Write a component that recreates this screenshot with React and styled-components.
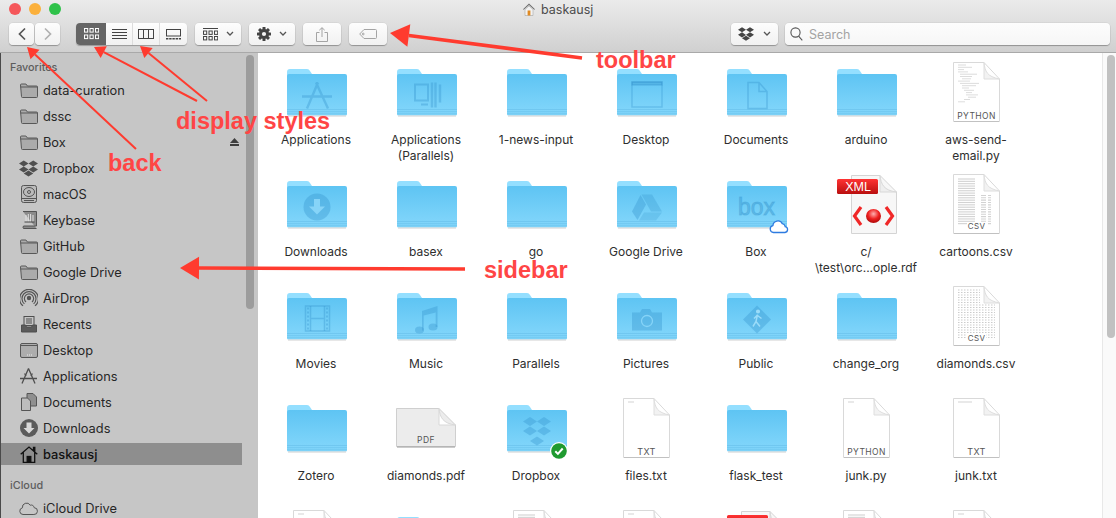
import React from "react";
import styled, { createGlobalStyle } from "styled-components";
import { FaDropbox } from "react-icons/fa";

const Global = createGlobalStyle`
  html, body { margin: 0; padding: 0; width: 1116px; height: 518px; overflow: hidden; background: #fff; }
  * { box-sizing: border-box; }
`;

const Window = styled.div`
  position: relative;
  width: 1116px;
  height: 518px;
  overflow: hidden;
  display: flex;
  flex-direction: column;
  font-family: Inter, "Liberation Sans", sans-serif;
  color: #2c2c2c;
`;

const TitleArea = styled.header`
  height: 53px;
  flex: none;
  padding: 0 6px 0 9px;
  background: linear-gradient(#ebebeb, #d0d0d0);
  border-bottom: 1px solid #a9a9a9;
  display: flex;
  flex-direction: column;
`;
const TitleRow = styled.div`
  height: 23px;
  flex: none;
  display: flex;
  align-items: center;
  padding-bottom: 5px;
`;
const Lights = styled.div`
  display: flex;
  gap: 8px;
  width: 52px;
`;
const Light = styled.span`
  width: 12px;
  height: 12px;
  border-radius: 50%;
  background: ${p => p.$c};
`;
const Title = styled.div`
  display: flex;
  align-items: center;
  gap: 6px;
  font-size: 12.5px;
  color: #4c4c4c;
  margin-left: 462px;
`;
const Toolbar = styled.div`
  display: flex;
  align-items: stretch;
  height: 22px;
`;
const ToolButton = styled.div`
  width: ${p => p.$w}px;
  margin-left: ${p => p.$ml || 0}px;
  display: flex;
  align-items: center;
  justify-content: center;
  gap: ${p => p.$gap || 0}px;
  background: linear-gradient(#fdfdfd, #f1f1f1);
  border-radius: 4px;
  box-shadow: 0 1px 1px rgba(0,0,0,.28), 0 0 0 .5px rgba(0,0,0,.08);
  color: #444;
`;
const ViewGroup = styled.div`
  width: 111px;
  margin-left: 16px;
  display: grid;
  grid-template-columns: 30px 26px 27px 28px;
  border-radius: 4px;
  overflow: hidden;
  box-shadow: 0 1px 1px rgba(0,0,0,.28);
  background: linear-gradient(#fdfdfd, #f1f1f1);
`;
const ViewSeg = styled.div`
  display: flex;
  align-items: center;
  justify-content: center;
  border-left: ${p => (p.$first || p.$active ? "none" : "1px solid #dcdcdc")};
  background: ${p => (p.$active ? "#656565" : "transparent")};
`;
const Search = styled.div`
  width: 325px;
  margin-left: 7px;
  display: flex;
  align-items: center;
  gap: 6px;
  padding-left: 5px;
  background: linear-gradient(#fdfdfd, #f6f6f6);
  border-radius: 4px;
  box-shadow: 0 1px 1px rgba(0,0,0,.28), 0 0 0 .5px rgba(0,0,0,.08);
  font-size: 12.5px;
  color: #a3a3a3;
`;
const Spacer = styled.div`
  flex: 1;
`;

const Body = styled.div`
  flex: 1;
  min-height: 0;
  display: flex;
`;
const Sidebar = styled.aside`
  width: 258px;
  flex: none;
  display: flex;
  background: #c6c6c6;
  border-left: 1px solid #4a4a4a;
`;
const SideList = styled.nav`
  width: 241px;
  flex: none;
  display: flex;
  flex-direction: column;
  padding-top: 7px;
`;
const SideHead = styled.div`
  height: 16px;
  line-height: 16px;
  padding-left: 9px;
  font-size: 10.8px;
  font-weight: 500;
  color: #5d5d5d;
  margin-top: ${p => p.$mt || 0}px;
  margin-bottom: 1px;
`;
const SideItem = styled.div`
  height: 26px;
  flex: none;
  display: flex;
  align-items: center;
  padding-left: 18px;
  position: relative;
  font-size: 12.8px;
  color: #262626;
  &::before {
    content: "";
    display: ${p => (p.$selected ? "block" : "none")};
    position: absolute;
    left: 0;
    right: 0;
    top: 2px;
    bottom: 2px;
    background: #8e8e8e;
  }
`;
const SideIcon = styled.span`
  width: 19px;
  height: 20px;
  margin-right: 5px;
  position: relative;
  display: flex;
  align-items: center;
  justify-content: center;
  color: #4f4f4f;
`;
const SideText = styled.span`
  position: relative;
  flex: 1;
  color: ${p => (p.$selected ? "#111" : "inherit")};
  font-weight: ${p => (p.$selected ? 500 : 400)};
`;
const Eject = styled.span`
  position: relative;
  margin-right: 3px;
  display: flex;
`;
const SideTrack = styled.div`
  flex: 1;
  padding: 2px 4px 0;
`;
const SideThumb = styled.div`
  width: 8px;
  height: 254px;
  border-radius: 4px;
  background: #9c9c9c;
`;

const Main = styled.main`
  flex: 1;
  min-width: 0;
  display: flex;
  background: #fff;
`;
const Grid = styled.section`
  flex: 1;
  padding: 7px 0 0 3px;
  display: grid;
  grid-template-columns: repeat(7, 110px);
  grid-auto-rows: 112px;
  align-content: start;
  overflow: hidden;
`;
const Cell = styled.div`
  display: flex;
  flex-direction: column;
  align-items: center;
`;
const IconBox = styled.div`
  width: 64px;
  height: 64px;
  flex: none;
  margin-bottom: 8px;
  display: flex;
  align-items: center;
  justify-content: center;
`;
const NudgedSvg = styled.svg`
  flex: none;
  margin-left: 2px;
  overflow: visible;
`;
const Label = styled.div`
  width: 106px;
  text-align: center;
  font-size: 12px;
  line-height: 16px;
  color: #2e2e2e;
  white-space: pre-line;
`;
const MainTrack = styled.div`
  width: 14px;
  flex: none;
  padding: 2px 2px 0 4px;
  background: #fafafa;
  border-left: 1px solid #e8e8e8;
`;
const MainThumb = styled.div`
  width: 8px;
  height: 283px;
  border-radius: 4px;
  background: #c1c1c1;
`;

const Overlay = styled.svg`
  position: absolute;
  inset: 0;
  pointer-events: none;
`;
const Note = styled.div`
  position: absolute;
  left: ${p => p.$x}px;
  top: ${p => p.$y}px;
  font-family: "Liberation Sans", Arial, sans-serif;
  font-weight: 700;
  font-size: 23.5px;
  line-height: 28px;
  color: #ff4545;
  white-space: nowrap;
`;

/* ---------- toolbar drawings ---------- */
const Chevron = ({ dir, color }) => (
  <svg width="10" height="14" viewBox="0 0 10 14" fill="none" stroke={color} strokeWidth="1.7">
    <path d={dir === "l" ? "M8 1.5 2.5 7 8 12.5" : "M2 1.5 7.5 7 2 12.5"} />
  </svg>
);
const SmallChevron = () => (
  <svg width="8" height="6" viewBox="0 0 8 6" fill="none" stroke="#555" strokeWidth="1.3"><path d="M1 1l3 3 3-3" /></svg>
);
const GridGlyph = ({ color, w = 15 }) => (
  <svg width={w} height="12" viewBox="0 0 15 12" fill="none" stroke={color} strokeWidth="1">
    {[0, 5.5, 11].map(x => [0.5, 7].map(y => <rect key={x + "-" + y} x={x + 0.5} y={y} width="3.2" height="3.6" />))}
  </svg>
);
const ListGlyph = () => (
  <svg width="15" height="11" viewBox="0 0 15 11" stroke="#444" strokeWidth="1">
    {[0.5, 3.5, 6.5, 9.5].map(y => <path key={y} d={`M0 ${y}h15`} />)}
  </svg>
);
const ColumnsGlyph = () => (
  <svg width="16" height="11" viewBox="0 0 16 11" fill="none" stroke="#444" strokeWidth="1">
    <rect x=".5" y=".5" width="15" height="9" /><path d="M5.5 .5v9M10.5 .5v9" />
  </svg>
);
const CoverGlyph = () => (
  <svg width="15" height="11" viewBox="0 0 15 11" fill="none" stroke="#444" strokeWidth="1">
    <rect x=".5" y=".5" width="14" height="6.5" />
    <path d="M0 9.8h2.4M3.2 9.8h2.4M6.4 9.8h2.4M9.6 9.8h2.4M12.8 9.8h2.2" strokeWidth="1.6" />
  </svg>
);
const ArrangeGlyph = () => (
  <svg width="15" height="13" viewBox="0 0 15 13" fill="none" stroke="#444" strokeWidth="1">
    <path d="M0 .5h15" />
    {[0, 5.5, 11].map(x => [3, 8.5].map(y => <rect key={x + "-" + y} x={x + 0.5} y={y} width="3.2" height="3.4" />))}
  </svg>
);
const GearGlyph = () => (
  <svg width="14" height="14" viewBox="0 0 14 14">
    <g fill="#444">
      {[0, 45, 90, 135].map(a => <rect key={a} x="5.5" y="0" width="3" height="14" rx=".5" transform={`rotate(${a} 7 7)`} />)}
      <circle cx="7" cy="7" r="5" />
    </g>
    <circle cx="7" cy="7" r="2.1" fill="#f5f5f5" />
  </svg>
);
const ShareGlyph = () => (
  <svg width="12" height="15" viewBox="0 0 12 15" fill="none" stroke="#a4a4a4" strokeWidth="1">
    <path d="M3.5 5.5H.5v9h11v-9h-3M6 10V.8M3.3 3.2 6 .7l2.7 2.5" />
  </svg>
);
const TagGlyph = () => (
  <svg width="18" height="10" viewBox="0 0 18 10" fill="none" stroke="#a4a4a4" strokeWidth="1">
    <path d="M5 .5h11.5a1 1 0 0 1 1 1v7a1 1 0 0 1-1 1H5L.7 5z" /><circle cx="4.2" cy="5" r=".9" />
  </svg>
);
const MagnifyGlyph = () => (
  <svg width="13" height="14" viewBox="0 0 13 14" fill="none" stroke="#555" strokeWidth="1.1">
    <circle cx="5.5" cy="5.5" r="4.6" /><path d="M8.6 9.2 12.3 13.3" />
  </svg>
);
const HouseTitle = () => (
  <svg width="12" height="13" viewBox="0 0 12 13">
    <path d="M6 .5 0 6.2l.8.6L6 2l5.2 4.8.8-.6z" fill="#6d6d6d" />
    <path d="M2 6.5 6 3l4 3.5V12.5H2z" fill="#f2f2f2" stroke="#999" strokeWidth=".5" />
    <rect x="4.6" y="7.5" width="2.8" height="5" fill="#e08a22" />
  </svg>
);

/* ---------- sidebar drawings ---------- */
const SideFolder = () => (
  <svg width="18" height="15" viewBox="0 0 18 15" fill="#ababab" stroke="#585858" strokeWidth="1">
    <path d="M.5 2a1 1 0 0 1 1-1h4.4l1.6 2h9a1 1 0 0 1 1 1v9.5a1 1 0 0 1-1 1h-14a1 1 0 0 1-1-1z" />
    <path d="M.5 4h17" fill="none" />
  </svg>
);
const SideDisk = () => (
  <svg width="16" height="18" viewBox="0 0 16 18" fill="none" stroke="#555">
    <rect x=".5" y=".5" width="15" height="17" rx="2" fill="#bbb" />
    <ellipse cx="8" cy="7" rx="5.5" ry="4.5" /><circle cx="8" cy="7" r="1.5" />
    <path d="M.5 13.5h15M3 15.5h10" />
  </svg>
);
const SideBook = () => (
  <svg width="16" height="18" viewBox="0 0 16 18" stroke="#555">
    <path d="M2 .5h13.5V15H2.5a2 2 0 0 0 0 2.5h13" fill="#8b8b8b" />
    <path d="M5 4v7M7.3 3v8M9.6 3v8M12 4v7" stroke="#e3e3e3" />
    <path d="M3.5 11h10" stroke="#444" />
  </svg>
);
const SideAirDrop = () => (
  <svg width="18" height="18" viewBox="0 0 18 18" fill="none" stroke="#555" strokeWidth="1.2">
    <circle cx="9" cy="9" r="1.6" fill="#555" />
    <path d="M6 13a4.6 4.6 0 1 1 6 0M4.4 14.9a7 7 0 1 1 9.2 0M3 16.8a9 9 0 0 1-.2-14 8.9 8.9 0 0 1 12.4 0 9 9 0 0 1-.2 14" />
  </svg>
);
const SideRecents = () => (
  <svg width="16" height="17" viewBox="0 0 16 17" stroke="#4f4f4f">
    <rect x="3" y=".5" width="10" height="9" fill="#c6c6c6" />
    <path d="M5 3h6M5 5h6M5 7h6" />
    <path d="M.5 9h4l1 2h5l1-2h4v7h-15z" fill="#5b5b5b" />
  </svg>
);
const SideDesktop = () => (
  <svg width="18" height="15" viewBox="0 0 18 15" stroke="#565656">
    <rect x=".5" y=".5" width="17" height="14" rx="1.5" fill="#adadad" />
    <path d="M.5 2.5h17" /><path d="M7 12h1M9 12h1M11 12h1" stroke="#eee" />
  </svg>
);
const SideApps = () => (
  <svg width="19" height="17" viewBox="0 0 19 17" fill="none" stroke="#4f4f4f" strokeWidth="1.3">
    <path d="M9.5 .5 3 15.5M9.5 .5 16 15.5M1 10.5h17" />
    <path d="M5.6 5.5 7 8M13.4 5.5 12 8" />
  </svg>
);
const SideDocs = () => (
  <svg width="16" height="18" viewBox="0 0 16 18" stroke="#555" fill="#bdbdbd">
    <path d="M6 .5h6l3.5 3.5v9H6z" fill="#8f8f8f" />
    <path d="M.5 5h6l3 3v9.5h-9z" />
  </svg>
);
const SideDownloads = () => (
  <svg width="18" height="18" viewBox="0 0 18 18">
    <circle cx="9" cy="9" r="9" fill="#5b5b5b" />
    <path d="M6.5 3.5h5V9h3L9 14.5 3.5 9h3z" fill="#d9d9d9" />
  </svg>
);
const SideHome = () => (
  <svg width="18" height="17" viewBox="0 0 18 17" fill="none" stroke="#111" strokeWidth="1.3">
    <path d="M.7 8.3 9 1l8.3 7.3M3.3 6.500v10h11.400v-10M13.500 4.500V1.500h1.300v4" />
    <rect x="7.2" y="10.500" width="3.600" height="6" fill="#111" />
  </svg>
);
const SideCloud = () => (
  <svg width="19" height="13" viewBox="0 0 19 13" fill="none" stroke="#555" strokeWidth="1">
    <path d="M4 12.500a3.400 3.400 0 0 1-.6-6.700 4.200 4.200 0 0 1 7.800-2.600 3 3 0 0 1 4 2.500 3.400 3.400 0 0 1-.3 6.800z" />
  </svg>
);
const EjectGlyph = () => (
  <svg width="9" height="8" viewBox="0 0 9 8" fill="#3f3f3f"><path d="M4.500 0 9 5H0z" /><rect y="6" width="9" height="2" /></svg>
);

/* ---------- content drawings ---------- */
const G = "rgba(52,148,205,.36)";
const L = "#86d4f8";
const glyphs = {
  app: (
    <g fill="none" stroke={G} strokeWidth="2.4">
      <path d="M31 9 20 35M29 9 41 35M15 23h30" />
    </g>
  ),
  parallels: (
    <g fill="none" stroke={G} strokeWidth="2">
      <rect x="18" y="11" width="13" height="16" />
      <path d="M35 9v25M38.500 9v25M43 11v18" strokeWidth="2.400" />
      <path d="M24 31h7" />
    </g>
  ),
  desktop: (
    <g fill="none" stroke={G} strokeWidth="1.400">
      <rect x="15" y="8.500" width="30" height="25" />
      <rect x="15" y="8.500" width="30" height="3" fill={G} />
    </g>
  ),
  documents: <path d="M21 9h11l8 9v17H21zM32 9v9h8" fill="none" stroke={G} strokeWidth="1.500" />,
  downloads: (
    <g>
      <circle cx="30" cy="21.500" r="13.500" fill={G} />
      <path d="M27 13.500h6V21h5l-8 8-8-8h5z" fill={L} />
    </g>
  ),
  drive: (
    <g fill={G}>
      <path d="M24.500 9h10.500l10 17H34z" opacity=".8" />
      <path d="M23.500 9.500 29 19l-8.500 15.500L15 26z" />
      <path d="M22 35h17l6-8H27z" opacity=".65" />
    </g>
  ),
  box: (
    <text x="29.500" y="29.500" textAnchor="middle" fontFamily="Liberation Sans, sans-serif" fontSize="23" fill={G} stroke={G} strokeWidth="1">box</text>
  ),
  movies: (
    <g fill="none" stroke={G}>
      <rect x="18.500" y="8.500" width="24" height="25" strokeWidth="1.500" />
      <path d="M23.500 8.500v25M37.500 8.500v25M23.500 21h14" strokeWidth="1.500" />
      <path d="M21 10v22M40 10v22" strokeWidth="2" strokeDasharray="2 2" />
    </g>
  ),
  music: (
    <g fill={G}>
      <ellipse cx="22.500" cy="32.500" rx="4.500" ry="3.500" />
      <ellipse cx="36" cy="29.500" rx="4.500" ry="3.500" />
      <path d="M25 33V13.500L40.500 8.500v21h-1.800V15l-12 3v15z" />
    </g>
  ),
  pictures: (
    <g>
      <path d="M15 15h8l2-3.500h8l2 3.500h10v18H15z" fill={G} />
      <circle cx="30" cy="23.500" r="5.500" fill="none" stroke={L} strokeWidth="1.300" />
    </g>
  ),
  public: (
    <g>
      <path d="M30 8 44 22 30 36 16 22z" fill={G} />
      <g stroke="#9bdcf9" strokeWidth="1.500" fill="none">
        <circle cx="31" cy="14" r="1.300" fill="#9bdcf9" />
        <path d="M30.500 17 29 24l-3 5M29 24l4 5M30.500 18l4 3M30 18l-3 3" />
      </g>
    </g>
  ),
  dropbox: (
    <g fill={G}>
      <path d="M23 7.500 30 12l-7 4.500-7-4.500zM37 7.500 44 12l-7 4.500L30 12zM23 17l7 4.500-7 4.500-7-4.500zM37 17l7 4.500-7 4.500-7-4.500zM30 27l7 4.500-7 4.500-7-4.500z" />
    </g>
  ),
};

const Folder = ({ glyph, badge }) => (
  <NudgedSvg width="60" height="48" viewBox="0 0 60 48">
    <defs>
      <linearGradient id="fbody" x1="0" y1="0" x2="0" y2="1">
        <stop offset="0" stopColor="#5ec4f3" />
        <stop offset="1" stopColor="#84d7fb" />
      </linearGradient>
    </defs>
    <path d="M0 4a3 3 0 0 1 3-3h17c1.500 0 2.200.8 3 2l2 3H20L0 8z" fill="#94dfff" />
    <path d="M0 8a2 2 0 0 1 2-2h56a2 2 0 0 1 2 2v38a1.500 1.500 0 0 1-1.500 1.500h-57A1.500 1.500 0 0 1 0 46z" fill="url(#fbody)" />
    <path d="M0 41.500h60M0 43.700h60M0 45.800h60" stroke="#6cc4ee" strokeWidth=".8" />
    <path d="M1 48h58" stroke="#d0d0d0" strokeWidth="1" />
    {glyph && <g transform="translate(0 5.500)">{glyphs[glyph]}</g>}
    {badge === "cloud" && (
      <path d="M46.500 52.500a3.500 3.500 0 0 1-.6-6.900 5 5 0 0 1 9.400-2 3.600 3.600 0 0 1 2.900 3 3 3 0 0 1-.2 5.900z" fill="#fff" stroke="#2e7be0" strokeWidth="1.300" />
    )}
    {badge === "check" && (
      <g>
        <circle cx="52" cy="47" r="9" fill="#fff" />
        <circle cx="52" cy="47" r="7.800" fill="#1f9a30" />
        <path d="M48.300 47.300l2.600 2.600 4.800-5.400" fill="none" stroke="#fff" strokeWidth="2" />
      </g>
    )}
  </NudgedSvg>
);

const DocShape = () => (
  <g>
    <path d="M.5.500H31L46.500 17V59.500H.5z" fill="#fff" stroke="#d9d9d9" />
    <path d="M31 .5c1 9 3 14 15.500 16.500H31z" fill="#f2f2f2" stroke="#dedede" />
    <path d="M1 60h45" stroke="#a8a8a8" strokeWidth="1" />
  </g>
);
const TinyLabel = ({ x = 23.500, y = 56.500, size = 9, children }) => (
  <text x={x} y={y} textAnchor="middle" fontFamily="Inter, Liberation Sans, sans-serif" fontSize={size} letterSpacing=".4" fill="#555">{children}</text>
);
const codeLines = [[5,8],[5,14],[5,6],[5,10],[7,17],[7,12],[9,9],[5,12],[7,19],[9,14],[9,7],[11,10],[13,6],[13,12],[15,8],[11,6],[5,7]];
const csvRows = Array.from({ length: 20 }, (_, i) => i);

const DocFile = ({ tag, preview }) => (
  <svg width="47" height="60" viewBox="0 0 47 60">
    <DocShape />
    {preview === "code" && codeLines.map(([x, w], i) => (
      <path key={i} d={`M${x} ${3 + i * 2.300}h${w}`} stroke="#c4c4c4" strokeWidth=".6" />
    ))}
    {preview === "plain" && <path d="M5 4h6" stroke="#c0c0c0" strokeWidth=".7" />}
    {preview === "line" && <path d="M5 4h14" stroke="#c0c0c0" strokeWidth=".7" />}
    {preview === "table" && csvRows.map(i => (
      <g key={i} stroke="#d2d2d2" strokeWidth="1.100">
        <path d={`M5 ${5 + i * 2.350}h17`} />
        {i > 6 && <path d={`M28 ${5 + i * 2.350}h5M35 ${5 + i * 2.350}h3`} />}
      </g>
    ))}
    {preview === "dense" && csvRows.map(i => (
      <g key={i} stroke="#cbcbcb" strokeWidth="1.100" strokeDasharray="1.500 1.500">
        <path d={`M5 ${4 + i * 2.500}h${i < 6 ? 22 : 37}`} />
      </g>
    ))}
    {tag === "PYTHON" && <rect x="2" y="47" width="43" height="12" fill="#fff" />}
    {tag === "CSV" && <rect x="14" y="48" width="19" height="10" fill="#fff" />}
    {tag && <TinyLabel size={tag === "CSV" ? 8 : tag === "PYTHON" ? 8.500 : 9} y={tag === "CSV" ? 55 : 56.500}>{tag}</TinyLabel>}
  </svg>
);
const PdfFile = () => (
  <svg width="60" height="40" viewBox="0 0 60 40">
    <path d="M.5.500H43L59.500 17V38.500H.5z" fill="#ececec" stroke="#cfcfcf" />
    <path d="M43 .5c1 9 4 15 16.500 16.500H43z" fill="#fff" stroke="#d8d8d8" />
    <path d="M1 39h58" stroke="#9a9a9a" />
    <TinyLabel x={30} y={35} size={8.500}>PDF</TinyLabel>
  </svg>
);
const XmlFile = ({ bare }) => (
  <NudgedSvg width="60" height="60" viewBox="0 0 60 60">
    <defs>
      <linearGradient id="xred" x1="0" y1="0" x2="0" y2="1">
        <stop offset="0" stopColor="#f33" /><stop offset="1" stopColor="#b90f0f" />
      </linearGradient>
      <radialGradient id="xball" cx=".5" cy=".35" r=".6">
        <stop offset="0" stopColor="#ffb0b0" /><stop offset=".6" stopColor="#ee2020" /><stop offset="1" stopColor="#b80e0e" />
      </radialGradient>
    </defs>
    <path d="M14.500 1.500H43L59.500 18V59.500H14.500z" fill="#f7f7f7" stroke="#d4d4d4" />
    <path d="M43 1.500c1 9 4 15 16.500 16.500H43z" fill="#eee" stroke="#d8d8d8" />
    <rect x="0" y="5" width="41" height="15" rx="1.500" fill="url(#xred)" />
    {!bare && (
      <text x="21" y="17" textAnchor="middle" fontFamily="Liberation Sans, sans-serif" fontSize="12.500" fill="#fff">XML</text>
    )}
    <path d="M24 33 17.500 42 24 51M49 33l6.500 9L49 51" fill="none" stroke="#f02828" strokeWidth="3.200" />
    <ellipse cx="36.500" cy="42" rx="7.500" ry="7" fill="url(#xball)" />
  </NudgedSvg>
);

const items = [
  ["Applications", <Folder glyph="app" />],
  ["Applications\n(Parallels)", <Folder glyph="parallels" />],
  ["1-news-input", <Folder />],
  ["Desktop", <Folder glyph="desktop" />],
  ["Documents", <Folder glyph="documents" />],
  ["arduino", <Folder />],
  ["aws-send-\nemail.py", <DocFile tag="PYTHON" preview="code" />],
  ["Downloads", <Folder glyph="downloads" />],
  ["basex", <Folder />],
  ["go", <Folder />],
  ["Google Drive", <Folder glyph="drive" />],
  ["Box", <Folder glyph="box" badge="cloud" />],
  ["c/\n\\test\\orc...ople.rdf", <XmlFile />],
  ["cartoons.csv", <DocFile tag="CSV" preview="table" />],
  ["Movies", <Folder glyph="movies" />],
  ["Music", <Folder glyph="music" />],
  ["Parallels", <Folder />],
  ["Pictures", <Folder glyph="pictures" />],
  ["Public", <Folder glyph="public" />],
  ["change_org", <Folder />],
  ["diamonds.csv", <DocFile tag="CSV" preview="dense" />],
  ["Zotero", <Folder />],
  ["diamonds.pdf", <PdfFile />],
  ["Dropbox", <Folder glyph="dropbox" badge="check" />],
  ["files.txt", <DocFile tag="TXT" preview="plain" />],
  ["flask_test", <Folder />],
  ["junk.py", <DocFile tag="PYTHON" preview="plain" />],
  ["junk.txt", <DocFile tag="TXT" preview="line" />],
  ["", <DocFile preview="plain" />],
  ["", <Folder />],
  ["", <DocFile preview="table" />],
  ["", <DocFile preview="plain" />],
  ["", <XmlFile bare />],
  ["", <DocFile preview="table" />],
  ["", <DocFile preview="plain" />],
];

const favorites = [
  ["data-curation", <SideFolder />],
  ["dssc", <SideFolder />],
  ["Box", <SideFolder />, "eject"],
  ["Dropbox", <FaDropbox size={19} />],
  ["macOS", <SideDisk />],
  ["Keybase", <SideBook />],
  ["GitHub", <SideFolder />],
  ["Google Drive", <SideFolder />],
  ["AirDrop", <SideAirDrop />],
  ["Recents", <SideRecents />],
  ["Desktop", <SideDesktop />],
  ["Applications", <SideApps />],
  ["Documents", <SideDocs />],
  ["Downloads", <SideDownloads />],
  ["baskausj", <SideHome />, "selected"],
];

const Arrow = ({ x1, y1, x2, y2, w = 3, head = 0 }) => {
  const a = Math.atan2(y2 - y1, x2 - x1);
  const bx = x2 - Math.cos(a) * head;
  const by = y2 - Math.sin(a) * head;
  const hw = head * 0.6;
  const px = -Math.sin(a) * hw;
  const py = Math.cos(a) * hw;
  return (
    <g>
      <line x1={x1} y1={y1} x2={bx} y2={by} stroke="#ff3b2f" strokeWidth={w} />
      <polygon points={`${x2},${y2} ${bx + px},${by + py} ${bx - px},${by - py}`} fill="#ff3b2f" />
    </g>
  );
};

export default function App() {
  return (
    <Window>
      <Global />
      <TitleArea>
        <TitleRow>
          <Lights>
            <Light $c="#f5575a" /><Light $c="#fbb03b" /><Light $c="#2fc24a" />
          </Lights>
          <Title><HouseTitle />baskausj</Title>
        </TitleRow>
        <Toolbar>
          <ToolButton $w={25}><Chevron dir="l" color="#555" /></ToolButton>
          <ToolButton $w={25} $ml={1}><Chevron dir="r" color="#b0b0b0" /></ToolButton>
          <ViewGroup>
            <ViewSeg $active><GridGlyph color="#fff" /></ViewSeg>
            <ViewSeg $first><ListGlyph /></ViewSeg>
            <ViewSeg><ColumnsGlyph /></ViewSeg>
            <ViewSeg><CoverGlyph /></ViewSeg>
          </ViewGroup>
          <ToolButton $w={46} $ml={8} $gap={8}><ArrangeGlyph /><SmallChevron /></ToolButton>
          <ToolButton $w={46} $ml={8} $gap={8}><GearGlyph /><SmallChevron /></ToolButton>
          <ToolButton $w={38} $ml={8}><ShareGlyph /></ToolButton>
          <ToolButton $w={38} $ml={8}><TagGlyph /></ToolButton>
          <Spacer />
          <ToolButton $w={47} $gap={9}><FaDropbox size={16} color="#444" /><SmallChevron /></ToolButton>
          <Search><MagnifyGlyph />Search</Search>
        </Toolbar>
      </TitleArea>
      <Body>
        <Sidebar>
          <SideList>
            <SideHead>Favorites</SideHead>
            {favorites.map(([name, icon, extra]) => (
              <SideItem key={name} $selected={extra === "selected"}>
                <SideIcon>{icon}</SideIcon>
                <SideText $selected={extra === "selected"}>{name}</SideText>
                {extra === "eject" && <Eject><EjectGlyph /></Eject>}
              </SideItem>
            ))}
            <SideHead $mt={11}>iCloud</SideHead>
            <SideItem>
              <SideIcon><SideCloud /></SideIcon>
              <SideText>iCloud Drive</SideText>
            </SideItem>
          </SideList>
          <SideTrack><SideThumb /></SideTrack>
        </Sidebar>
        <Main>
          <Grid>
            {items.map(([name, icon], i) => (
              <Cell key={i}>
                <IconBox>{icon}</IconBox>
                <Label>{name}</Label>
              </Cell>
            ))}
          </Grid>
          <MainTrack><MainThumb /></MainTrack>
        </Main>
      </Body>
      <Overlay width="1116" height="518" viewBox="0 0 1116 518">
        <Arrow x1={136} y1={149} x2={27} y2={47} w={2} head={11} />
        <Arrow x1={197} y1={101} x2={94} y2={47} w={2} head={11} />
        <Arrow x1={207} y1={101} x2={140} y2={46} w={2} head={11} />
        <Arrow x1={582} y1={58} x2={390} y2={33} w={3.5} head={19} />
        <Arrow x1={465} y1={269} x2={180} y2={268} w={3.5} head={19} />
      </Overlay>
      <Note $x={596} $y={46}>toolbar</Note>
      <Note $x={176} $y={107}>display styles</Note>
      <Note $x={108} $y={149}>back</Note>
      <Note $x={484} $y={256}>sidebar</Note>
    </Window>
  );
}
